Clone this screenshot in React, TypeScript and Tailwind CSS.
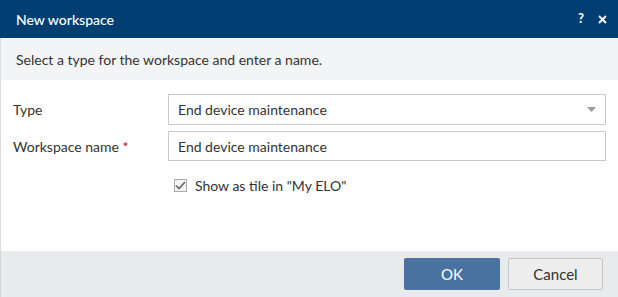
export default function App() {
  const font = { fontFamily: "Lato, 'Noto Sans', sans-serif" };
  return (
    <div className="w-[618px] h-[297px] flex flex-col bg-white text-[14px] text-[#333]" style={font}>
      <div className="h-[38px] shrink-0 bg-[#013f73] text-white flex items-center justify-between pl-[16px] pr-[11px]">
        <span className="text-[14px] font-medium">New workspace</span>
        <div className="flex items-center gap-[14px] text-[13px] font-bold">
          <span>?</span>
          <svg width="9" height="9" viewBox="0 0 9 9">
            <path d="M1 1 L8 8 M8 1 L1 8" stroke="white" strokeWidth="1.8" />
          </svg>
        </div>
      </div>
      <div className="h-[42px] shrink-0 bg-[#f3f4f6] flex items-center px-[15px] border-l border-[#dcdcdc]">
        Select a type for the workspace and enter a name.
      </div>
      <div className="flex-1 border-l border-[#dcdcdc] pl-[12px] pr-[12px] pt-[14px]">
        <div className="grid grid-cols-[155px_1fr] gap-y-[6px] items-center">
          <span>Type</span>
          <div className="h-[31px] border border-[#c9c9c9] flex items-center justify-between px-[9px]">
            <span>End device maintenance</span>
            <svg width="9" height="5" viewBox="0 0 9 5">
              <path d="M0 0 H9 L4.5 5 Z" fill="#9a9a9a" />
            </svg>
          </div>
          <span>
            Workspace name <span className="text-[#d0021b]">*</span>
          </span>
          <div className="h-[30px] border border-[#c9c9c9] flex items-center px-[9px]">
            End device maintenance
          </div>
          <span />
          <label className="flex items-center gap-[8px] pl-[6px] pt-[8px]">
            <span className="w-[13px] h-[13px] border border-[#aaa] bg-[#f4f4f4] flex items-center justify-center">
              <svg width="11" height="9" viewBox="0 0 11 9">
                <path d="M1 4.5 L4 7.5 L10 1" stroke="#666" strokeWidth="1.6" fill="none" />
              </svg>
            </span>
            <span>Show as tile in "My ELO"</span>
          </label>
        </div>
      </div>
      <div className="h-[46px] shrink-0 bg-[#e9eaec] border-l border-[#d6d6d6] flex items-center justify-end gap-[8px] pr-[15px]">
        <button className="w-[96px] h-[32px] rounded-[2px] bg-[#4a72a0] text-white text-[15px]">OK</button>
        <button className="w-[95px] h-[32px] rounded-[2px] bg-[#ededed] border border-[#c6c6c6] text-[#333] text-[15px]">
          Cancel
        </button>
      </div>
    </div>
  );
}
